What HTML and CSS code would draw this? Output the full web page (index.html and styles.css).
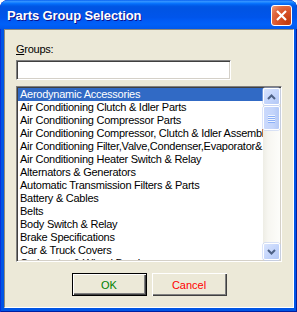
FILE: index.html
```html
<!DOCTYPE html>
<html lang="en">
<head>
    <meta charset="UTF-8">
    <title>Parts Group Selection</title>
    <link rel="stylesheet" href="styles.css">
</head>
<body>
    <div class="window">
        <div class="titlebar">
            <span class="title">Parts Group Selection</span>
            <span class="close">
                <svg width="11" height="11" viewBox="0 0 11 11">
                    <path d="M1 1 L10 10 M10 1 L1 10" stroke="#fff" stroke-width="2.2" fill="none"/>
                </svg>
            </span>
        </div>
        <div class="frame">
            <div class="panel">
                <label class="field-label" for="groups"><u>G</u>roups:</label>
                <input class="search" id="groups" type="text">

                <div class="listbox">
                    <ul class="items">
                        <li class="selected">Aerodynamic Accessories</li>
                        <li>Air Conditioning Clutch &amp; Idler Parts</li>
                        <li>Air Conditioning Compressor Parts</li>
                        <li>Air Conditioning Compressor, Clutch &amp; Idler Assembly</li>
                        <li>Air Conditioning Filter,Valve,Condenser,Evaporator&amp; Hoses</li>
                        <li>Air Conditioning Heater Switch &amp; Relay</li>
                        <li>Alternators &amp; Generators</li>
                        <li>Automatic Transmission Filters &amp; Parts</li>
                        <li>Battery &amp; Cables</li>
                        <li>Belts</li>
                        <li>Body Switch &amp; Relay</li>
                        <li>Brake Specifications</li>
                        <li>Car &amp; Truck Covers</li>
                        <li>Carburetor &amp; Wheel Bearings</li>
                    </ul>
                    <div class="scrollbar">
                        <div class="sb-btn">
                            <svg width="9" height="6" viewBox="0 0 9 6">
                                <path d="M1 5 L4.5 1.5 L8 5" stroke="#4d6185" stroke-width="2" fill="none"/>
                            </svg>
                        </div>
                        <div class="sb-track">
                            <div class="sb-thumb">
                                <span></span><span></span><span></span><span></span>
                            </div>
                        </div>
                        <div class="sb-btn">
                            <svg width="9" height="6" viewBox="0 0 9 6">
                                <path d="M1 1 L4.5 4.5 L8 1" stroke="#4d6185" stroke-width="2" fill="none"/>
                            </svg>
                        </div>
                    </div>
                </div>

                <div class="actions">
                    <button class="btn btn-ok">OK</button>
                    <button class="btn btn-cancel">Cancel</button>
                </div>
            </div>
        </div>
    </div>
</body>
</html>
```

FILE: styles.css
```css
* {
    box-sizing: border-box;
    margin: 0;
    padding: 0;
}

body {
    background: #fff;
    font-family: "Liberation Sans", Arial, sans-serif;
    font-size: 11px;
    letter-spacing: -0.25px;
    color: #000;
}

.window {
    width: 297px;
    height: 312px;
    display: flex;
    flex-direction: column;
    background: #0055e5;
    border-radius: 8px 8px 0 0;
    overflow: hidden;
    box-shadow: inset 1px 0 #0831d9, inset -1px 0 #001ea0, inset 0 -1px #001ea0;
}

.titlebar {
    height: 29px;
    flex: none;
    display: flex;
    align-items: center;
    justify-content: space-between;
    padding: 1px 5px 0 7px;
    border-radius: 8px 8px 0 0;
    background: linear-gradient(to bottom, #0058ee 0%, #3593ff 4%, #288eff 7%, #127dff 10%, #036ffc 13%, #0262ee 17%, #0057e5 22%, #0054e3 28%, #0055eb 60%, #005bf5 72%, #0060f8 84%, #0058ec 100%);
}

.title {
    color: #fff;
    font-weight: bold;
    font-size: 13px;
    letter-spacing: -0.1px;
    text-shadow: 1px 1px #0f1089;
}

.close {
    width: 21px;
    height: 21px;
    display: flex;
    align-items: center;
    justify-content: center;
    border: 1px solid #fff;
    border-radius: 3px;
    background: radial-gradient(circle at 85% 85%, #c23a0c 0%, #d9542a 50%, #e06a42 72%, #f0a080 100%);
}

.frame {
    flex: 1;
    display: flex;
    padding: 0 4px 4px;
}

.panel {
    flex: 1;
    display: flex;
    flex-direction: column;
    background: #ece9d8;
    border: 1px solid;
    border-color: #8d8a7d #fff #fff #8d8a7d;
    padding: 13px 11px 0;
}

.field-label {
    display: block;
    height: 13px;
    line-height: 13px;
}

.search {
    margin-top: 4px;
    width: 215px;
    height: 20px;
    background: #fff;
    border: 1px solid;
    border-color: #808080 #fff #fff #808080;
    box-shadow: inset 1px 1px #404040, inset -1px -1px #d4d0c8;
    outline: none;
    font: inherit;
}

.listbox {
    margin-top: 6px;
    width: 266px;
    height: 176px;
    display: flex;
    background: #fff;
    border: 1px solid;
    border-color: #808080 #fff #fff #808080;
    box-shadow: inset 1px 1px #404040, inset -1px -1px #d4d0c8;
    padding: 1px;
}

.items {
    flex: 1;
    list-style: none;
    overflow: hidden;
}

.items li {
    height: 13px;
    line-height: 13px;
    padding-left: 2px;
    white-space: nowrap;
    overflow: hidden;
}

.items li.selected {
    background: #316ac5;
    color: #fff;
}

.scrollbar {
    width: 17px;
    flex: none;
    display: flex;
    flex-direction: column;
    background: linear-gradient(to right, #eeede5, #f7f6f1 30%, #fdfdfa);
}

.sb-btn {
    height: 17px;
    flex: none;
    display: flex;
    align-items: center;
    justify-content: center;
    border: 1px solid #fff;
    border-radius: 2px;
    background: linear-gradient(135deg, #d9e4fd, #c1d3fb 60%, #b3c8f5);
    box-shadow: 0 0 0 0.5px #b7caf5;
}

.sb-track {
    flex: 1;
    padding-top: 1px;
}

.sb-thumb {
    height: 24px;
    display: flex;
    flex-direction: column;
    align-items: center;
    justify-content: center;
    gap: 1px;
    border: 1px solid #fff;
    border-radius: 2px;
    background: linear-gradient(to right, #cad9fc, #c4d5fb 60%, #b4c9f6);
    box-shadow: 0 0 0 0.5px #b7caf5;
}

.sb-thumb span {
    width: 7px;
    height: 1px;
    background: #eef4fe;
    box-shadow: 0 1px #8cb0f8;
}

.actions {
    margin-top: 11px;
    display: flex;
    justify-content: center;
    gap: 5px;
}

.btn {
    width: 75px;
    height: 23px;
    background: #ece9d8;
    border: none;
    font: inherit;
    box-shadow: inset 1px 1px #fff, inset -1px -1px #404040, inset -2px -2px #808080;
}

.btn-ok {
    color: #008000;
    border: 1px solid #000;
}

.btn-cancel {
    color: #f00;
}
```
